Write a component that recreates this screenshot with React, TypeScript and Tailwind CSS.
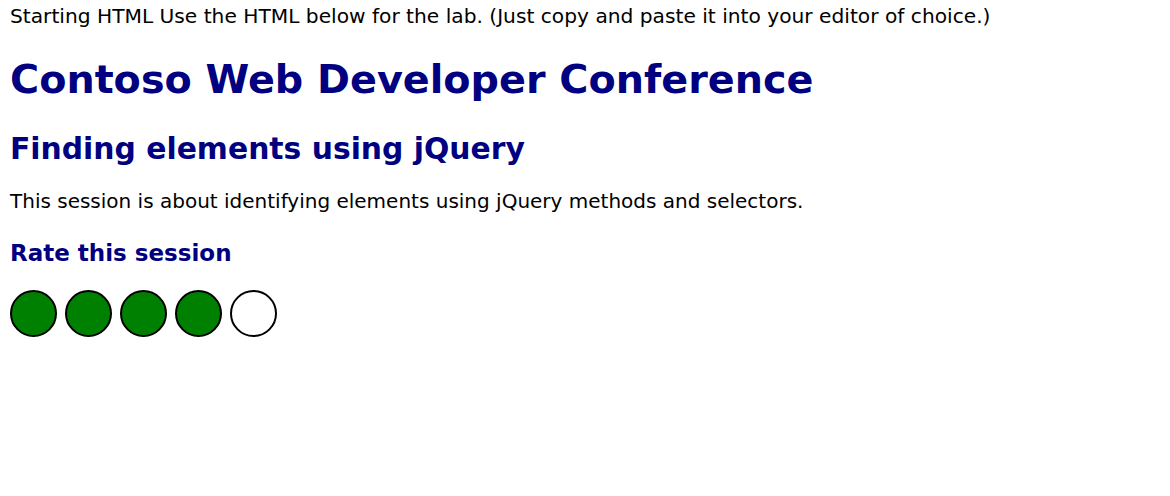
import React from 'react';

export default function App() {
    const rating = 4;

    return (
        <div className="min-h-[496px] bg-white px-[10px] pt-[6px] text-black font-['DejaVu_Sans',Verdana,sans-serif]">
            {/* Intro line */}
            <p className="text-[20.2px] leading-[20px]">
                Starting HTML Use the HTML below for the lab. (Just copy and paste it into your editor of choice.)
            </p>

            <h1 className="mt-[34px] text-[39.7px] leading-[39px] font-bold text-[#000080]">
                Contoso Web Developer Conference
            </h1>

            <h2 className="mt-[35px] text-[29.8px] leading-[30px] font-bold text-[#000080]">
                Finding elements using jQuery
            </h2>

            <p className="mt-[27px] text-[20px] leading-none">
                This session is about identifying elements using jQuery methods and selectors.
            </p>

            <h3 className="mt-[31px] text-[23px] leading-none font-bold text-[#000080]">
                Rate this session
            </h3>

            {/* Rating circles */}
            <div className="mt-[25px] flex gap-[8px]">
                {[1, 2, 3, 4, 5].map((n) => (
                    <div
                        key={n}
                        className={
                            n <= rating
                                ? 'w-[47px] h-[47px] rounded-full border-2 border-black bg-[#008000]'
                                : 'w-[47px] h-[47px] rounded-full border-2 border-black bg-white'
                        }
                    />
                ))}
            </div>
        </div>
    );
}
